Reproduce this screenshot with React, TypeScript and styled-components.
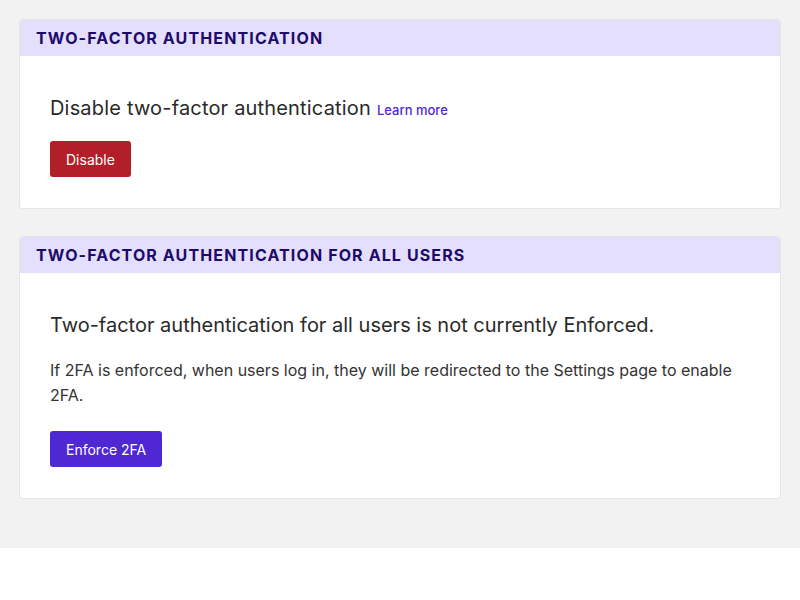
import React from "react";
import styled, { createGlobalStyle } from "styled-components";

const Global = createGlobalStyle`
  html, body { margin: 0; padding: 0; background: #ffffff; }
  body { font-family: Inter, "Noto Sans", sans-serif; }
  * { box-sizing: border-box; }
`;

const Page = styled.div`
  background: #f2f2f2;
  padding: 19px 19px 49px;
  display: flex;
  flex-direction: column;
  gap: 27px;
`;

const Card = styled.section`
  background: #ffffff;
  border: 1px solid #e6e6e6;
  border-radius: 3px;
  overflow: hidden;
`;

const CardHeader = styled.h2`
  margin: 0;
  height: 36px;
  display: flex;
  align-items: center;
  padding: 0 16px;
  background: #e3dffc;
  color: #1d0a6b;
  font-size: 16px;
  font-weight: 700;
  letter-spacing: 1.12px;
  text-transform: uppercase;
`;

const CardBody = styled.div`
  padding: 37px 30px 31px;
  display: flex;
  flex-direction: column;
  align-items: flex-start;
`;

const Heading = styled.h3<{ $spacing?: number }>`
  margin: 0;
  font-size: 20px;
  line-height: 30px;
  font-weight: 400;
  letter-spacing: ${(p) => p.$spacing ?? 0}px;
  color: #2a2a2a;
`;

const LearnMore = styled.a`
  font-size: 13px;
  line-height: 1;
  font-weight: 500;
  letter-spacing: 0;
  color: #4f27d6;
  text-decoration: none;
  margin-left: 6px;
`;

const Text = styled.p`
  margin: 18px 0 0;
  font-size: 16px;
  line-height: 25px;
  color: #333333;
`;

const Button = styled.button<{ $variant: "danger" | "primary"; $gap: number }>`
  margin-top: ${(p) => p.$gap}px;
  height: 36px;
  padding: 0 16px;
  border: none;
  border-radius: 3px;
  font-family: Inter, "Noto Sans", sans-serif;
  font-size: 14px;
  color: #ffffff;
  background: ${(p) => (p.$variant === "danger" ? "#b31f28" : "#4f27d3")};
  cursor: pointer;
`;

export default function App() {
  return (
    <>
      <Global />
      <Page>
        <Card>
          <CardHeader>Two-factor authentication</CardHeader>
          <CardBody>
            <Heading $spacing={0.18}>
              Disable two-factor authentication
              <LearnMore href="#">Learn more</LearnMore>
            </Heading>
            <Button $variant="danger" $gap={18}>Disable</Button>
          </CardBody>
        </Card>
        <Card>
          <CardHeader>Two-factor authentication for all users</CardHeader>
          <CardBody>
            <Heading>Two-factor authentication for all users is not currently Enforced.</Heading>
            <Text>
              If 2FA is enforced, when users log in, they will be redirected to the Settings page to enable 2FA.
            </Text>
            <Button $variant="primary" $gap={23}>Enforce 2FA</Button>
          </CardBody>
        </Card>
      </Page>
    </>
  );
}
